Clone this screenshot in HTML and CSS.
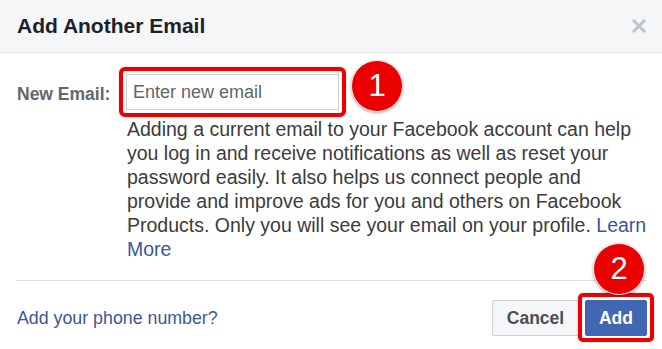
FILE: index.html
```html
<!DOCTYPE html>
<html lang="en">
<head>
<meta charset="utf-8">
<title>Add Another Email</title>
<link rel="stylesheet" href="styles.css">
</head>
<body>
<div class="dialog">
  <div class="header">
    <h1 class="title">Add Another Email</h1>
    <span class="close" aria-label="Close">
      <svg width="14" height="14" viewBox="0 0 14 14"><path d="M2 2 L12 12 M12 2 L2 12" stroke="#bec2c9" stroke-width="3" stroke-linecap="square"/></svg>
    </span>
  </div>
  <div class="body">
    <div class="row">
      <label class="label" for="email">New Email:</label>
      <div class="field">
        <span class="outline outline-input">
          <input id="email" class="input" type="text" placeholder="Enter new email">
        </span>
        <span class="badge badge-1">1</span>
        <p class="desc">Adding a current email to your Facebook account can help you log in and receive notifications as well as reset your password easily. It also helps us connect people and provide and improve ads for you and others on Facebook Products. Only you will see your email on your profile. <a class="link" href="#">Learn More</a></p>
      </div>
    </div>
    <div class="sep"></div>
    <div class="footer">
      <a class="link phone" href="#">Add your phone number?</a>
      <div class="buttons">
        <button class="btn btn-cancel">Cancel</button>
        <button class="btn btn-add">Add</button>
        <span class="badge badge-2">2</span>
      </div>
    </div>
  </div>
</div>
</body>
</html>
```
FILE: styles.css
```css
* { box-sizing: border-box; }
html, body { margin: 0; padding: 0; background: #fff; }
body { font-family: "Liberation Sans", Arial, sans-serif; }

.dialog { width: 662px; height: 349px; position: relative; overflow: hidden; }

.header {
  height: 53px;
  background: #f5f6f7;
  border-bottom: 1px solid #e5e5e5;
  display: flex;
  align-items: center;
  justify-content: space-between;
  padding: 0 16px 0 17px;
}
.title { margin: 0; font-size: 21px; font-weight: bold; color: #1d2129; }
.close { display: flex; width: 14px; height: 14px; }

.body { padding: 14px 15px 0 17px; }
.row { display: flex; }
.label {
  width: 110px;
  font-size: 17.5px;
  font-weight: bold;
  color: #606770;
  padding-top: 19px;
  line-height: 1;
}
.field { position: relative; flex: 1; }

.outline-input {
  display: inline-block;
  vertical-align: top;
  border: 4px solid #ee0000;
  border-radius: 6px;
  padding: 3px;
  margin-left: -8px;
  box-shadow: 0 0 2px rgba(0,0,0,0.25);
}
.input {
  display: block;
  width: 213px;
  height: 36px;
  border: 1px solid #ccd0d5;
  padding: 0 6px;
  font-family: "Liberation Sans", Arial, sans-serif;
  font-size: 18px;
  color: #1d2129;
  outline: none;
}
.input::placeholder { color: #5f646b; }

.badge {
  position: absolute;
  width: 52px;
  height: 52px;
  border-radius: 50%;
  background: #ea0000;
  color: #fff;
  font-size: 31px;
  line-height: 50px;
  text-align: center;
  border: 1px solid #fbe9e9;
  box-shadow: 0 1px 3px rgba(0,0,0,0.35);
}
.badge-1 { left: 224px; top: -7px; }

.desc {
  margin: 0 -2px 0 0;
  font-size: 19.5px;
  line-height: 24px;
  color: #3a3b3d;
}
.link { color: #385898; text-decoration: none; }

.sep { height: 1px; background: #dadde1; margin: 19px 0 0 -1px; }

.footer {
  display: flex;
  align-items: center;
  justify-content: space-between;
  padding-top: 19px;
}
.phone { font-size: 17.8px; }

.buttons { position: relative; display: flex; gap: 6px; }
.btn {
  height: 36px;
  border-radius: 2px;
  font-family: "Liberation Sans", Arial, sans-serif;
  font-size: 17.5px;
  font-weight: bold;
  padding: 0;
  cursor: pointer;
}
.btn-cancel { width: 87px; background: #f5f6f7; border: 1px solid #ccd0d5; color: #4b4f56; }
.btn-add {
  position: relative;
  width: 62px;
  background: #4267b2;
  border: 1px solid #4267b2;
  color: #fff;
}
.btn-add::after {
  content: "";
  position: absolute;
  inset: -8px -8px -7px -8px;
  border: 4px solid #ee0000;
  border-radius: 5px;
  box-shadow: 0 0 2px rgba(0,0,0,0.25);
}
.badge-2 { right: 2px; top: -57px; }
```
